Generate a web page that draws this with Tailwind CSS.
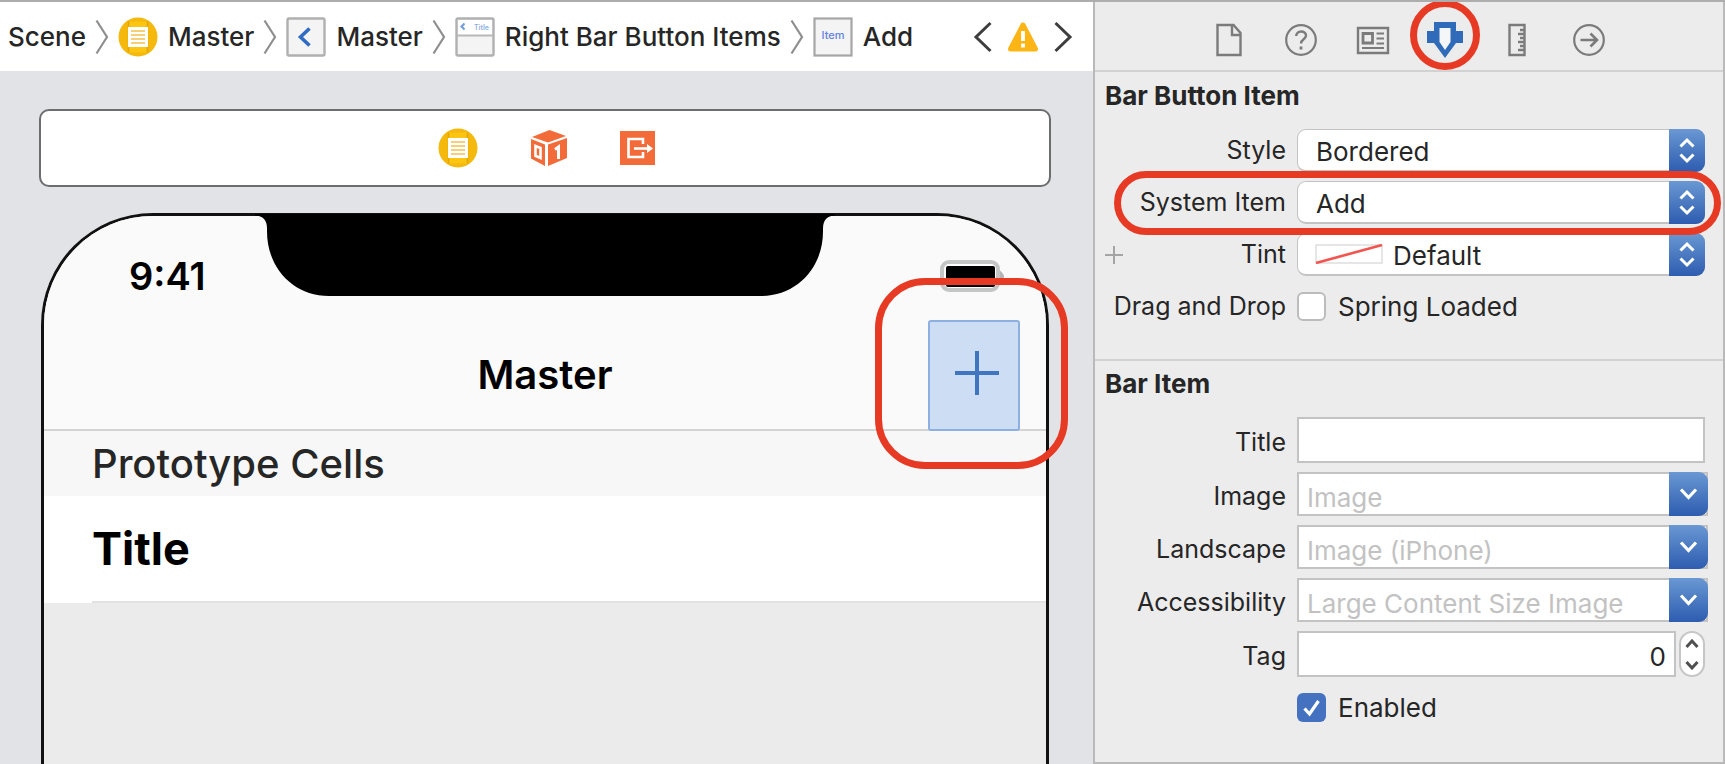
<!DOCTYPE html>
<html lang="en">
<head>
<meta charset="utf-8">
<title>Interface Builder</title>
<script src="https://cdn.jsdelivr.net/npm/@tailwindcss/browser@4"></script>
</head>
<body class="bg-[#ececec] font-['Inter',sans-serif] text-[#262626]">
<svg class="hidden">
  <defs>
    <symbol id="scene" viewBox="0 0 40 40"><circle cx="20" cy="20" r="19.5" fill="#f5b80c"/><path d="M10.5 4.500v31M29.500 4.500v31" stroke="#e3a406" stroke-width="1.500"/><path d="M11.500 4.500h17v31h-17z" fill="#fbc512"/><path d="M10 10h20v20H10z" fill="#fff"/><path d="M13 14h14M13 18h14M13 22h14M13 26h14" stroke="#f3c04a" stroke-width="1.600"/></symbol>
    <symbol id="sep" viewBox="0 0 14 36"><path d="M1.500 1.500 12 18 1.500 34.500" fill="none" stroke="#8e8e8e" stroke-width="2.200"/></symbol>
    <symbol id="updown" viewBox="0 0 36 43"><path d="m11.500 17.500 6.500-6.500 6.500 6.500M11.500 25.500l6.500 6.500 6.500-6.500" fill="none" stroke="#fff" stroke-width="3"/></symbol>
    <symbol id="down" viewBox="0 0 39 44"><path d="m12 17.500 7.500 8 7.500-8" fill="none" stroke="#fff" stroke-width="3.200"/></symbol>
  </defs>
</svg>
<div class="flex h-screen overflow-hidden border-t-2 border-[#adadad]">
  <main class="flex min-w-0 flex-1 flex-col bg-[#e2e3e6]">
    <nav aria-label="Jump bar" class="flex h-[69px] shrink-0 items-center whitespace-nowrap bg-white pl-2 pr-5 text-[26px] font-medium">
      <a href="#">Scene</a>
      <svg class="mx-[9px] h-9 w-[14px]"><use href="#sep"/></svg>
      <a href="#" class="flex items-center gap-[10px]"><svg class="size-10"><use href="#scene"/></svg>Master</a>
      <svg class="mx-[9px] h-9 w-[14px]"><use href="#sep"/></svg>
      <a href="#" class="flex items-center gap-[10px]"><svg class="size-10" viewBox="0 0 40 40"><rect x="1.500" y="1.500" width="37" height="37" rx="1.500" fill="#f4f4f4" stroke="#b0b0b0" stroke-width="2.400"/><path d="M23.500 11.500 14.500 20l9 8.500" fill="none" stroke="#2f6cc4" stroke-width="3.600"/></svg>Master</a>
      <svg class="mx-[9px] h-9 w-[14px]"><use href="#sep"/></svg>
      <a href="#" class="flex items-center gap-[10px]"><svg class="size-10" viewBox="0 0 40 40"><rect x="1.500" y="1.500" width="37" height="37" rx="1.500" fill="#f4f4f4" stroke="#b0b0b0" stroke-width="2.400"/><path d="M3 3h34v15H3z" fill="#fff"/><path d="M2 18.500h36" stroke="#b8b8b8" stroke-width="2"/><path d="M9.500 6.500 6.500 9.500l3 3" fill="none" stroke="#6f9bdc" stroke-width="2"/><text x="19" y="13" font-size="7" font-weight="600" fill="#8fb0e4">Title</text></svg>Right Bar Button Items</a>
      <svg class="mx-[9px] h-9 w-[14px]"><use href="#sep"/></svg>
      <a href="#" class="flex items-center gap-[10px]"><svg class="size-10" viewBox="0 0 40 40"><rect x="1.500" y="1.500" width="37" height="37" fill="#f4f4f4" stroke="#a6a6a6" stroke-width="2.200"/><text x="20" y="22" text-anchor="middle" font-size="11" font-weight="500" fill="#6282e4">Item</text></svg>Add</a>
      <div class="ml-auto flex items-center gap-[14px]">
        <button aria-label="Previous issue"><svg class="h-8 w-5" viewBox="0 0 20 32"><path d="M17.500 2 3 16l14.500 14" fill="none" stroke="#3e3e3e" stroke-width="3"/></svg></button>
        <button aria-label="Warnings"><svg class="h-8 w-8" viewBox="0 0 32 32"><path d="M16 4 28.500 28h-25z" fill="#fdb515" stroke="#fdb515" stroke-width="5" stroke-linejoin="round"/><path d="M16 10v10M16 22.500v4" stroke="#fff" stroke-width="3.800"/></svg></button>
        <button aria-label="Next issue"><svg class="h-8 w-5" viewBox="0 0 20 32"><path d="M2.500 2 17 16 2.500 30" fill="none" stroke="#3e3e3e" stroke-width="3"/></svg></button>
      </div>
    </nav>

    <div class="mr-[42px] ml-[39px] mt-[38px] flex h-[78px] shrink-0 items-center justify-center gap-[53px] rounded-[10px] border-[2px] border-[#6c6d6f] bg-white pl-1">
      <button aria-label="View controller"><svg class="block size-10"><use href="#scene"/></svg></button>
      <button aria-label="First responder"><svg class="block h-9 w-9" viewBox="0 0 36 36"><path d="M18.500 0 35 6 17 12.500 1 7z" fill="#f26b38"/><path d="M0 9l14 5.500V36L0 28.500zM17 14.500 36 8v20L17 36z" fill="#f26b38"/><path d="M4.500 16l5 2v10l-5-2.200z" fill="none" stroke="#fff" stroke-width="2.600"/><path d="m24 19.500 3.500-2.500v12" fill="none" stroke="#fff" stroke-width="3"/></svg></button>
      <button aria-label="Exit"><svg class="block h-9 w-9" viewBox="0 0 36 36"><path d="M0 1h35v34H0z" fill="#f26b38"/><path d="M23 14V9H8.500v18H23v-5" fill="none" stroke="#fff" stroke-width="2.600"/><path d="M14 18.500h14" stroke="#fff" stroke-width="2.600"/><path d="m27 14 6 4.500-6 4.500z" fill="#fff"/></svg></button>
    </div>

    <section aria-label="Master scene" class="relative mr-[44px] ml-[41px] mt-[26px] flex flex-1 flex-col rounded-t-[112px] border-x-[3px] border-t-[3px] border-[#111] bg-[#ebebeb]">
      <header class="flex h-[215px] shrink-0 flex-col rounded-t-[109px] border-b-2 border-[#d4d4d4] bg-[#fafafa] text-black">
        <div class="flex h-[119px] items-center justify-between pr-[39px] pl-[85px]">
          <time class="text-[38px] font-semibold leading-[46px]">9:41</time>
          <svg class="h-8 w-[68px]" viewBox="0 0 68 32"><rect x="3" y="2" width="56" height="28" rx="7" fill="#fff" stroke="#c4c6c6" stroke-width="4"/><rect x="7" y="6" width="49" height="21" rx="2"/><path d="M62 13q4 4 0 8z" fill="#b5b5b5" stroke="#b5b5b5" stroke-width="2"/></svg>
        </div>
        <h1 class="py-[15px] text-center text-[40px] font-semibold leading-[50px]">Master</h1>
      </header>
      <svg class="absolute -top-[2px] left-1/2 h-[82px] w-[580px] -translate-x-1/2" viewBox="0 0 580 82"><path d="M0 0h580v1.500c-8 .500-12 4.500-12 13v3c0 36-26 64.500-62 64.500H74C38 82 12 53.500 12 17.500v-3C12 6 8 2 0 1.500z"/></svg>
      <h2 class="flex h-[65px] shrink-0 items-center bg-[#f7f7f7] pl-[48px] text-[40px] font-medium">Prototype Cells</h2>
      <div class="shrink-0 bg-white pl-[48px]"><p class="flex h-[107px] items-center border-b-2 border-[#e2e2e2] text-[45px] font-bold text-black">Title</p></div>
      <button aria-label="Add" class="absolute right-[26px] top-[104px] flex h-[111px] w-[92px] items-center justify-center rounded-[3px] border-2 border-[#8db0e3] bg-[#cdddf3] pb-[5px] pl-[5px]"><svg class="size-11" viewBox="0 0 44 44"><path d="M22 0v44M0 22h44" stroke="#3f76bf" stroke-width="4"/></svg></button>
      <div class="absolute -right-[22px] top-[62px] h-[191px] w-[193px] rounded-[50px] border-[7px] border-[#e63a24]"></div>
    </section>
  </main>

  <aside class="flex w-[632px] shrink-0 flex-col border-x-2 border-b-2 border-[#b9b9b9] bg-[#ececec] text-[25px]">
    <div class="flex h-[70px] shrink-0 items-center justify-center gap-9 border-b-2 border-[#d2d2d2] pt-2">
      <button aria-label="File inspector"><svg class="block size-9" viewBox="0 0 36 36" fill="none" stroke="#7b7b7b" stroke-width="2.400"><path d="M6.500 3h16l7 8v22h-23zM21 3v10h8.500"/></svg></button>
      <button aria-label="Help inspector"><svg class="block size-9" viewBox="0 0 36 36" fill="none" stroke="#7b7b7b" stroke-width="2.200"><circle cx="18" cy="18" r="14.800"/><path d="M13.200 14c0-6 9.800-6 9.800-.500 0 4-5 3.500-5 8" stroke-width="2.400"/><path d="M18 24.500v3" stroke-width="2.800"/></svg></button>
      <button aria-label="Identity inspector"><svg class="block size-9" viewBox="0 0 36 36" fill="none" stroke="#7b7b7b" stroke-width="2.400"><path d="M3 6h30v25H3z"/><path d="M8 11.500h9.500v9.500H8z" stroke-width="2.800"/><path d="M21.500 11.500H29M21.500 16.500H29M21.500 21.500H29M7 26h22" stroke-width="2.200"/></svg></button>
      <button aria-label="Attributes inspector" class="relative"><svg class="block size-9" viewBox="0 0 36 36"><path d="M7 0h22v9h7v12h-7l-11 15L7 21H0V9h7z" fill="#2f6bb8"/><path d="M12.500 6h11v14L18 28l-5.500-8z" fill="#f4f6f8"/></svg><span class="absolute -left-[17px] -top-[22px] size-[70px] rounded-full border-[7px] border-[#e63a24]"></span></button>
      <button aria-label="Size inspector"><svg class="block size-9" viewBox="0 0 36 36" fill="none" stroke="#7b7b7b" stroke-width="2.400"><path d="M10.500 3h15v30h-15zM25 8h-4M25 12h-6M25 16h-4M25 20h-6M25 24h-4M25 28h-6"/></svg></button>
      <button aria-label="Connections inspector"><svg class="block size-9" viewBox="0 0 36 36" fill="none" stroke="#7b7b7b" stroke-width="2.200"><circle cx="18" cy="18" r="14.800"/><path d="M9.500 18H26M19.500 11.500 26 18l-6.500 6.500" stroke-width="2.600"/></svg></button>
    </div>

    <section class="flex h-[289px] shrink-0 flex-col border-b-2 border-[#d2d2d2] pr-[18px] pl-[10px] pt-[8px]">
      <h2 class="text-[26px] font-bold leading-8">Bar Button Item</h2>
      <div class="mt-[17px] grid grid-cols-[181px_minmax(0,1fr)] items-center gap-x-[11px] gap-y-[9px]">
        <label for="style" class="text-right">Style</label>
        <div class="relative flex h-[43px]">
          <select id="style" class="w-full appearance-none rounded-[9px] border border-b-2 border-[#c3c3c3] bg-white pl-[18px] pt-[2px] text-[26px]"><option>Bordered</option></select>
          <svg class="pointer-events-none absolute right-0 top-0 h-[43px] w-9 rounded-r-[9px] bg-linear-to-b from-[#6a98d3] to-[#2e5cb0]"><use href="#updown"/></svg>
        </div>
        <label for="item" class="text-right">System Item</label>
        <div class="relative flex h-[43px]">
          <select id="item" class="w-full appearance-none rounded-[9px] border border-b-2 border-[#c3c3c3] bg-white pl-[18px] pt-[2px] text-[26px]"><option>Add</option></select>
          <svg class="pointer-events-none absolute right-0 top-0 h-[43px] w-9 rounded-r-[9px] bg-linear-to-b from-[#6a98d3] to-[#2e5cb0]"><use href="#updown"/></svg>
          <div class="pointer-events-none absolute -left-[183px] -right-[16px] -top-[10px] z-10 h-[64px] rounded-full border-[7px] border-[#e63a24]"></div>
        </div>
        <div class="flex items-center justify-between">
          <button aria-label="Add variation"><svg class="block size-[18px]" viewBox="0 0 18 18"><path d="M9 0v18M0 9h18" stroke="#a4a4a4" stroke-width="2"/></svg></button>
          <label for="tint">Tint</label>
        </div>
        <div class="relative flex h-[43px]">
          <select id="tint" class="w-full appearance-none rounded-[9px] border border-b-2 border-[#c3c3c3] bg-white pl-[95px] pt-[2px] text-[26px]"><option>Default</option></select>
          <svg class="pointer-events-none absolute left-[18px] top-[11px] h-5 w-[68px]" viewBox="0 0 68 20"><path d="M1 1h66v18H1z" fill="#fff" stroke="#dedede" stroke-width="1.500"/><path d="M1 19 67 1" stroke="#f2544f" stroke-width="2.600"/></svg>
          <svg class="pointer-events-none absolute right-0 top-0 h-[43px] w-9 rounded-r-[9px] bg-linear-to-b from-[#6a98d3] to-[#2e5cb0]"><use href="#updown"/></svg>
        </div>
        <span class="whitespace-nowrap text-right" id="dnd">Drag and Drop</span>
        <label class="flex h-[43px] items-center gap-[12px] text-[26px]"><input type="checkbox" aria-describedby="dnd" class="size-[29px] appearance-none rounded-[6px] border-2 border-[#bcbcbc] bg-white">Spring Loaded</label>
      </div>
    </section>

    <section class="pr-[18px] pl-[10px] pt-[7px]">
      <h2 class="text-[26px] font-bold leading-8">Bar Item</h2>
      <div class="mt-[17px] grid grid-cols-[181px_minmax(0,1fr)] items-center gap-x-[11px] gap-y-[9px]">
        <label for="title" class="pt-[5px] text-right">Title</label>
        <input id="title" class="h-[46px] w-full border-2 border-[#c3c3c3] bg-white px-2 text-[26px]">
        <label for="image" class="pt-[5px] text-right">Image</label>
        <div class="relative -mr-[3px] flex h-[44px]">
          <input id="image" placeholder="Image" class="w-full border-2 border-[#c3c3c3] bg-white pl-2 pt-[6px] text-[26px] placeholder:text-[#c2c2c2]">
          <button aria-label="Show images" class="absolute right-0 top-0 h-[44px] w-[39px] rounded-r-[9px] bg-linear-to-b from-[#6a98d3] to-[#2e5cb0]"><svg class="block h-[44px] w-[39px]"><use href="#down"/></svg></button>
        </div>
        <label for="land" class="pt-[5px] text-right">Landscape</label>
        <div class="relative -mr-[3px] flex h-[44px]">
          <input id="land" placeholder="Image (iPhone)" class="w-full border-2 border-[#c3c3c3] bg-white pl-2 pt-[6px] text-[26px] placeholder:text-[#c2c2c2]">
          <button aria-label="Show landscape images" class="absolute right-0 top-0 h-[44px] w-[39px] rounded-r-[9px] bg-linear-to-b from-[#6a98d3] to-[#2e5cb0]"><svg class="block h-[44px] w-[39px]"><use href="#down"/></svg></button>
        </div>
        <label for="acc" class="pt-[5px] text-right">Accessibility</label>
        <div class="relative -mr-[3px] flex h-[44px]">
          <input id="acc" placeholder="Large Content Size Image" class="w-full border-2 border-[#c3c3c3] bg-white pl-2 pt-[6px] text-[26px] placeholder:text-[#c2c2c2]">
          <button aria-label="Show accessibility images" class="absolute right-0 top-0 h-[44px] w-[39px] rounded-r-[9px] bg-linear-to-b from-[#6a98d3] to-[#2e5cb0]"><svg class="block h-[44px] w-[39px]"><use href="#down"/></svg></button>
        </div>
        <label for="tag" class="pt-[5px] text-right">Tag</label>
        <div class="flex h-[46px] gap-[3px]">
          <input id="tag" value="0" class="min-w-0 flex-1 border-2 border-[#c3c3c3] bg-white pr-2 pt-[5px] text-right text-[26px]">
          <div class="flex w-[26px] flex-col overflow-hidden rounded-full border-2 border-[#c6c6c6] bg-white">
            <button aria-label="Increase tag" class="flex flex-1 items-center justify-center"><svg class="h-[10px] w-[14px]" viewBox="0 0 14 10"><path d="m1.500 8 5.500-6 5.500 6" fill="none" stroke="#505050" stroke-width="3"/></svg></button>
            <button aria-label="Decrease tag" class="flex flex-1 items-center justify-center"><svg class="h-[10px] w-[14px]" viewBox="0 0 14 10"><path d="m1.500 2 5.500 6 5.500-6" fill="none" stroke="#505050" stroke-width="3"/></svg></button>
          </div>
        </div>
        <label class="col-start-2 flex h-[43px] items-center gap-[12px] text-[26px]"><span class="relative flex"><input type="checkbox" checked class="size-[29px] appearance-none rounded-[6px] bg-[#4472c0]"><svg class="pointer-events-none absolute left-0 top-0 size-[29px]" viewBox="0 0 29 29"><path d="m7.500 15.500 5 5.500L21.500 8" fill="none" stroke="#fff" stroke-width="3.200"/></svg></span>Enabled</label>
      </div>
    </section>
  </aside>
</div>
</body>
</html>
